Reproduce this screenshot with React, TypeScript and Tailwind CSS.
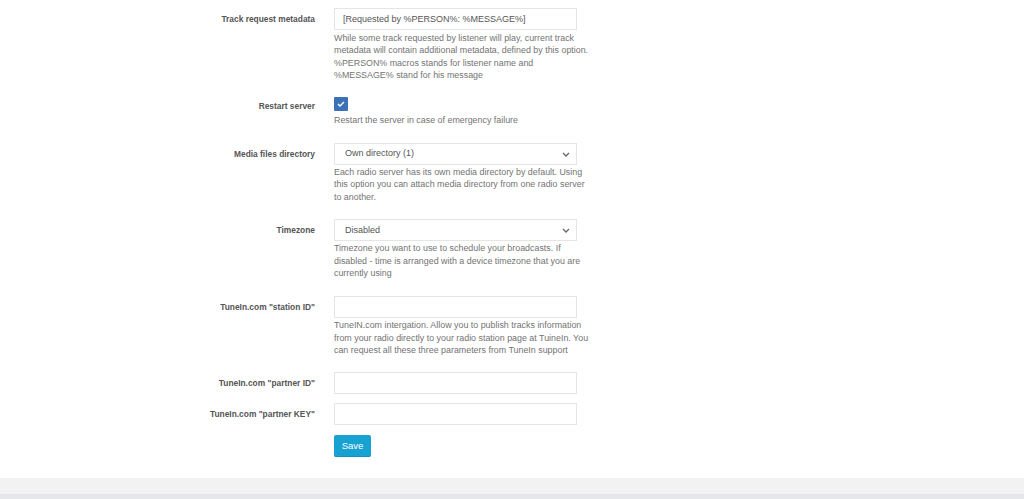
import React from "react";

const font = { fontFamily: '"Liberation Sans", Arial, sans-serif' };

function Label({ children }: { children: React.ReactNode }) {
  return (
    <div className="w-[315px] shrink-0 text-right text-[8.4px] font-bold leading-[22px] text-[#555555]">
      {children}
    </div>
  );
}

function Help({ lines, className }: { lines: string[]; className: string }) {
  return (
    <div className={"text-[8.9px] leading-[12.4px] text-[#737373] whitespace-nowrap " + className}>
      {lines.map((l, i) => (
        <div key={i}>{l}</div>
      ))}
    </div>
  );
}

function TextInput({ value }: { value?: string }) {
  return (
    <div className="h-[22px] w-[243px] border border-[#e5e5e5] bg-white pl-[8px] text-[9px] leading-[20px] text-[#555555]">
      {value}
    </div>
  );
}

function Select({ value }: { value: string }) {
  return (
    <div className="flex h-[22px] w-[243px] items-center justify-between border border-[#e5e5e5] bg-white pl-[10px] pr-[6px] text-[9px] text-[#555555]">
      <span>{value}</span>
      <svg width="8" height="5" viewBox="0 0 8 5" fill="none">
        <path d="M1 1l3 3 3-3" stroke="#666" strokeWidth="1.3" />
      </svg>
    </div>
  );
}

function Row({ label, children }: { label: string; children: React.ReactNode }) {
  return (
    <div className="flex">
      <Label>{label}</Label>
      <div className="ml-[19px]">{children}</div>
    </div>
  );
}

export default function App() {
  return (
    <div style={font} className="flex min-h-[499px] w-full flex-col bg-white">
      <div className="flex flex-col gap-[9px] pt-[8px] pb-[21px]">
        <Row label="Track request metadata">
          <TextInput value="[Requested by %PERSON%: %MESSAGE%]" />
          <Help
            className="mt-[2px] mb-[6px]"
            lines={[
              "While some track requested by listener will play, current track",
              "metadata will contain additional metadata, defined by this option.",
              "%PERSON% macros stands for listener name and",
              "%MESSAGE% stand for his message",
            ]}
          />
        </Row>
        <div className="flex">
          <div className="w-[315px] shrink-0 pt-[3px] text-right text-[8.4px] font-bold leading-[12px] text-[#555555]">
            Restart server
          </div>
          <div className="ml-[19px]">
            <div className="flex h-[14px] w-[14px] items-center justify-center rounded-[1px] bg-[#3b71b7]">
              <svg width="8" height="6" viewBox="0 0 8 6" fill="none">
                <path d="M1 3l2 2 4-4" stroke="white" strokeWidth="1.4" />
              </svg>
            </div>
            <Help className="mt-[3px] mb-[8px]" lines={["Restart the server in case of emergency failure"]} />
          </div>
        </div>
        <Row label="Media files directory">
          <Select value="Own directory (1)" />
          <Help
            className="mt-[1px] mb-[7px]"
            lines={[
              "Each radio server has its own media directory by default. Using",
              "this option you can attach media directory from one radio server",
              "to another.",
            ]}
          />
        </Row>
        <Row label="Timezone">
          <Select value="Disabled" />
          <Help
            className="mt-[1px] mb-[8px]"
            lines={[
              "Timezone you want to use to schedule your broadcasts. If",
              "disabled - time is arranged with a device timezone that you are",
              "currently using",
            ]}
          />
        </Row>
        <Row label={'TuneIn.com "station ID"'}>
          <TextInput />
          <Help
            className="mt-[1px] mb-[6px]"
            lines={[
              "TuneIN.com intergation. Allow you to publish tracks information",
              "from your radio directly to your radio station page at TuineIn. You",
              "can request all these three parameters from TuneIn support",
            ]}
          />
        </Row>
        <Row label={'TuneIn.com "partner ID"'}>
          <TextInput />
        </Row>
        <Row label={'TuneIn.com "partner KEY"'}>
          <TextInput />
        </Row>
        <div className="mt-[1px] flex">
          <div className="w-[315px] shrink-0" />
          <div className="ml-[19px] flex">
            <button className="h-[22px] w-[37px] rounded-[2px] border-b border-[#1690bb] bg-[#18a2d1] text-[9.5px] leading-[21px] text-white">
              Save
            </button>
          </div>
        </div>
      </div>
      <div className="h-[16px] bg-[#f2f2f2]" />
      <div className="h-[5px] bg-[#e5e7ea]" />
    </div>
  );
}
